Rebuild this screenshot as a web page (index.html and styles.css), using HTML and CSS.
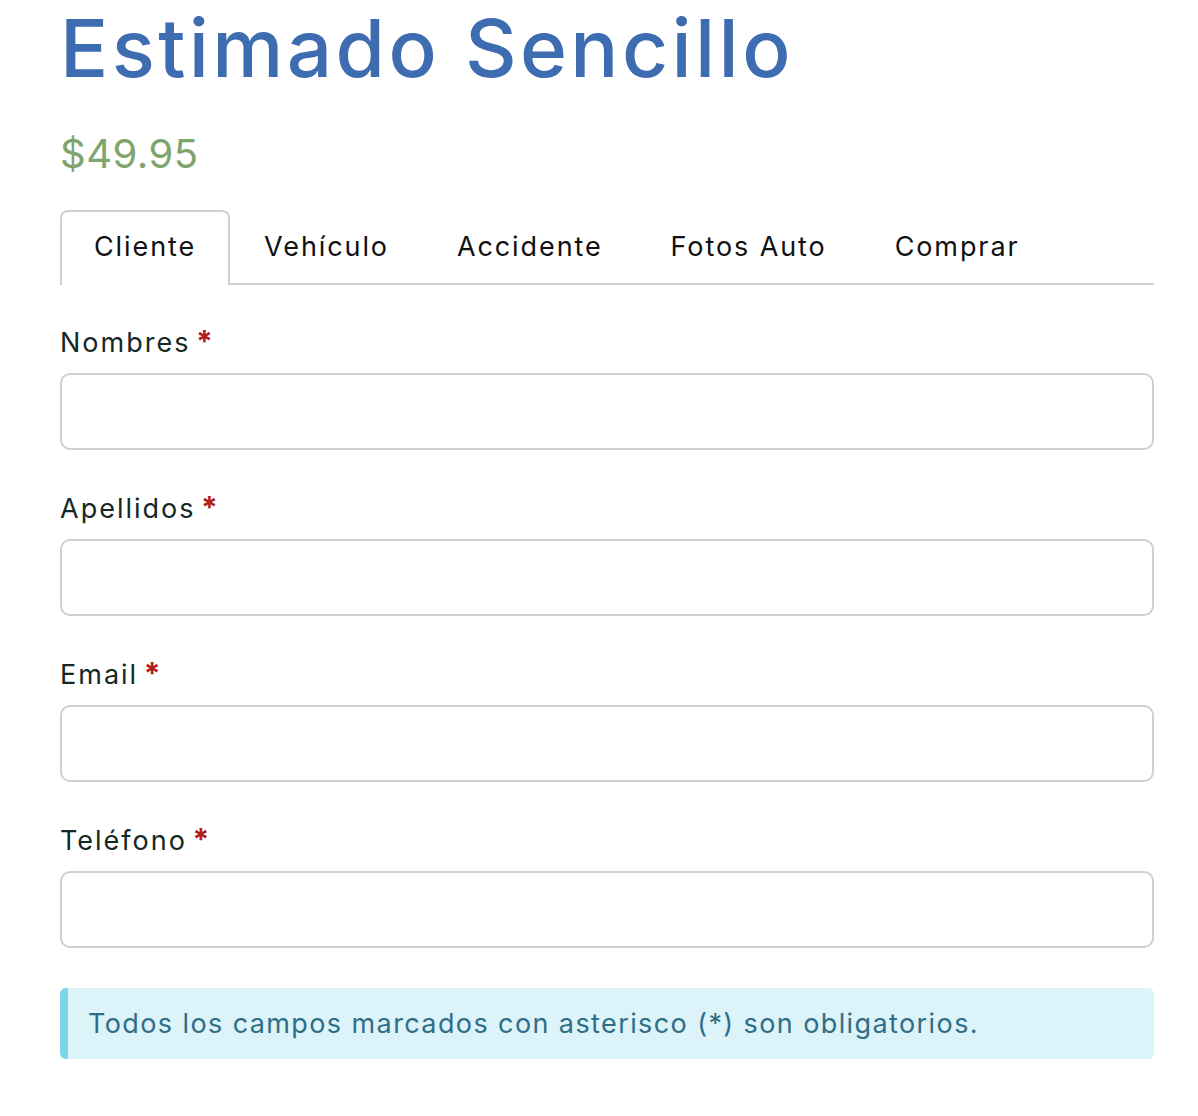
FILE: index.html
```html
<!DOCTYPE html>
<html lang="es">
<head>
<meta charset="utf-8">
<title>Estimado Sencillo</title>
<link rel="stylesheet" href="styles.css">
</head>
<body>
<main class="page">
  <h1 class="title">Estimado Sencillo</h1>
  <p class="price">$49.95</p>
  <ul class="tabs">
    <li class="tab active">Cliente</li>
    <li class="tab">Vehículo</li>
    <li class="tab">Accidente</li>
    <li class="tab">Fotos Auto</li>
    <li class="tab">Comprar</li>
  </ul>
  <form class="form">
    <div class="field">
      <label class="label">Nombres <span class="req">*</span></label>
      <input class="input" type="text">
    </div>
    <div class="field">
      <label class="label">Apellidos <span class="req">*</span></label>
      <input class="input" type="text">
    </div>
    <div class="field">
      <label class="label">Email <span class="req">*</span></label>
      <input class="input" type="email">
    </div>
    <div class="field">
      <label class="label">Teléfono <span class="req">*</span></label>
      <input class="input" type="tel">
    </div>
  </form>
  <div class="alert">Todos los campos marcados con asterisco (*) son obligatorios.</div>
</main>
</body>
</html>
```
FILE: styles.css
```css
* { box-sizing: border-box; }
body {
  margin: 0;
  background: #fff;
  font-family: Inter, "Open Sans", sans-serif;
}
.page {
  width: 1094px;
  margin-left: 60px;
  display: flex;
  flex-direction: column;
}
.title {
  margin: 0;
  font-size: 80px;
  font-weight: 500;
  line-height: 96px;
  color: #3e6cb0;
  letter-spacing: 3.4px;
}
.price {
  margin: 34px 0 0;
  font-size: 40px;
  font-weight: 400;
  line-height: 48px;
  color: #7fa46e;
  letter-spacing: 0.5px;
}
.tabs {
  list-style: none;
  margin: 32px 0 0;
  padding: 0;
  display: flex;
  border-bottom: 2px solid #cfd0d4;
}
.tab {
  padding: 0 32px;
  height: 73px;
  line-height: 70px;
  font-size: 27px;
  letter-spacing: 1.9px;
  color: #111;
  border: 2px solid transparent;
  border-bottom: none;
  border-radius: 8px 8px 0 0;
  margin-bottom: -2px;
}
.tab.active {
  border-color: #cfd0d4;
  background: #fff;
  height: 75px;
}
.form {
  display: flex;
  flex-direction: column;
  gap: 41px;
  margin-top: 40px;
}
.field {
  display: flex;
  flex-direction: column;
  gap: 12px;
}
.label {
  display: block;
  height: 36px;
  font-size: 27px;
  line-height: 36px;
  letter-spacing: 2px;
  word-spacing: -4px;
  color: #142826;
}
.req {
  color: #b0201a;
  font-weight: 700;
  font-size: 30px;
  line-height: 0;
  letter-spacing: 0;
}
.input {
  height: 77px;
  border: 2px solid #cfd0d4;
  border-radius: 10px;
  background: #fff;
}
.alert {
  margin-top: 40px;
  height: 71px;
  background: #dcf3f9;
  border-left: 8px solid #7dd3ea;
  border-radius: 6px;
  padding-left: 20px;
  line-height: 71px;
  font-size: 27px;
  letter-spacing: 1.4px;
  color: #2e6e86;
}
```
